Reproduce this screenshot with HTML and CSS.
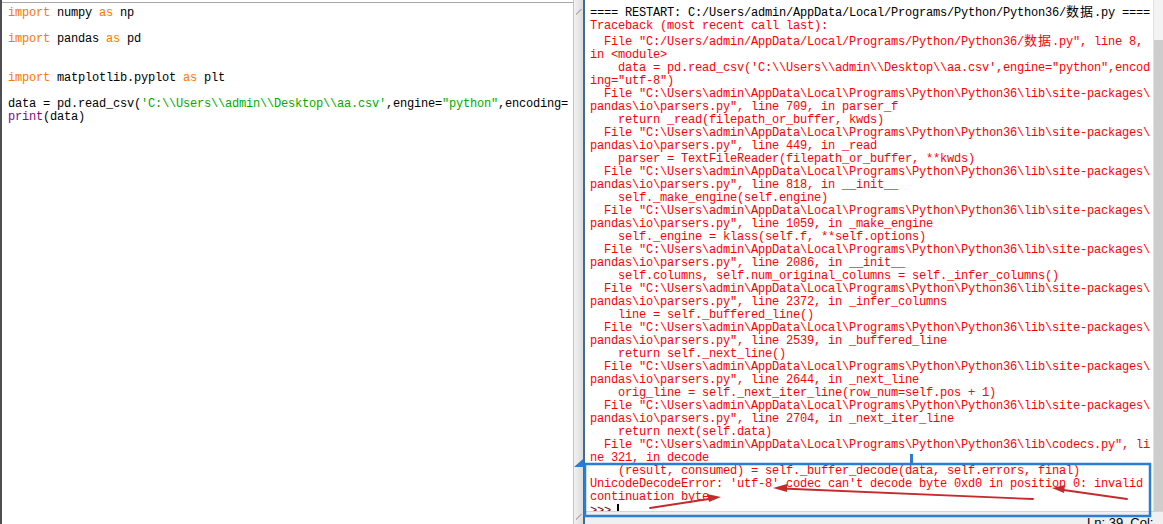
FILE: index.html
```html
<!DOCTYPE html>
<html lang="en">
<head>
  <meta charset="UTF-8">
  <title>IDLE - 数据.py</title>
  <link rel="stylesheet" href="styles.css">
</head>
<body>
  <div class="screen">
    <div class="edge"></div>

    <div class="editor">
<pre class="code"><span class="kw">import</span> numpy <span class="kw">as</span> np

<span class="kw">import</span> pandas <span class="kw">as</span> pd


<span class="kw">import</span> matplotlib.pyplot <span class="kw">as</span> plt

data = pd.read_csv(<span class="str">'C:\\Users\\admin\\Desktop\\aa.csv'</span>,engine=<span class="str">"python"</span>,encoding=<span class="str">"utf-8"</span>)
<span class="bi">print</span>(data)</pre>
    </div>
    <div class="lscroll"><span class="grip"></span><span class="grip bottom"></span></div>
    <div class="divider"></div>

    <div class="shell">
      <div class="shell-body">
<pre class="out"><span class="prompt">&gt;&gt;&gt; </span>
<span class="plain">==== RESTART: C:/Users/admin/AppData/Local/Programs/Python/Python36/<span class="cjk">数据</span>.py ====</span>
<span class="err">Traceback (most recent call last):
  File "C:/Users/admin/AppData/Local/Programs/Python/Python36/<span class="cjk">数据</span>.py", line 8,
in &lt;module&gt;
    data = pd.read_csv('C:\\Users\\admin\\Desktop\\aa.csv',engine="python",encod
ing="utf-8")
  File "C:\Users\admin\AppData\Local\Programs\Python\Python36\lib\site-packages\
pandas\io\parsers.py", line 709, in parser_f
    return _read(filepath_or_buffer, kwds)
  File "C:\Users\admin\AppData\Local\Programs\Python\Python36\lib\site-packages\
pandas\io\parsers.py", line 449, in _read
    parser = TextFileReader(filepath_or_buffer, **kwds)
  File "C:\Users\admin\AppData\Local\Programs\Python\Python36\lib\site-packages\
pandas\io\parsers.py", line 818, in __init__
    self._make_engine(self.engine)
  File "C:\Users\admin\AppData\Local\Programs\Python\Python36\lib\site-packages\
pandas\io\parsers.py", line 1059, in _make_engine
    self._engine = klass(self.f, **self.options)
  File "C:\Users\admin\AppData\Local\Programs\Python\Python36\lib\site-packages\
pandas\io\parsers.py", line 2086, in __init__
    self.columns, self.num_original_columns = self._infer_columns()
  File "C:\Users\admin\AppData\Local\Programs\Python\Python36\lib\site-packages\
pandas\io\parsers.py", line 2372, in _infer_columns
    line = self._buffered_line()
  File "C:\Users\admin\AppData\Local\Programs\Python\Python36\lib\site-packages\
pandas\io\parsers.py", line 2539, in _buffered_line
    return self._next_line()
  File "C:\Users\admin\AppData\Local\Programs\Python\Python36\lib\site-packages\
pandas\io\parsers.py", line 2644, in _next_line
    orig_line = self._next_iter_line(row_num=self.pos + 1)
  File "C:\Users\admin\AppData\Local\Programs\Python\Python36\lib\site-packages\
pandas\io\parsers.py", line 2704, in _next_iter_line
    return next(self.data)
  File "C:\Users\admin\AppData\Local\Programs\Python\Python36\lib\codecs.py", li
ne 321, in decode
    (result, consumed) = self._buffer_decode(data, self.errors, final)
UnicodeDecodeError: 'utf-8' codec can't decode byte 0xd0 in position 0: invalid
continuation byte</span>
<span class="prompt">&gt;&gt;&gt; </span><span class="caret"></span></pre>
        <div class="rscroll"><div class="thumb"></div></div>
      </div>
      <div class="status">Ln: 39&nbsp;&nbsp;Col: 4</div>
    </div>

    <svg class="marks" width="1163" height="524" viewBox="0 0 1163 524">
      <rect x="585" y="464" width="565" height="52" fill="none" stroke="#2a7dd4" stroke-width="2.5"/>
      <polygon points="574,467 583,459 584,467" fill="#2a7dd4"/>
      <rect x="910" y="454" width="3" height="9" fill="#2a7dd4"/>
      <g fill="#c42a2e" stroke="#c42a2e" stroke-linecap="round">
        <line x1="650" y1="508" x2="712" y2="498.5" stroke-width="1.8"/>
        <polygon points="721,497 707,494 709,502" stroke="none"/>
        <line x1="1033" y1="499" x2="782" y2="488.5" stroke-width="1.8"/>
        <polygon points="773,488 787,484 787,492" stroke="none"/>
        <line x1="1127" y1="499" x2="1060" y2="489.5" stroke-width="1.8"/>
        <polygon points="1052,488 1065,485 1064,493" stroke="none"/>
      </g>
    </svg>
  </div>
</body>
</html>
```

FILE: styles.css
```css
*{ margin: 0; padding: 0; box-sizing: border-box; }
html, body{
  width: 1163px;
  height: 524px;
  overflow: hidden;
  background: #fff;
}
.screen{
  position: relative;
  display: flex;
  width: 1163px;
  height: 524px;
  font-family: "Liberation Mono", "Noto Sans CJK SC", monospace;
  font-size: 12px;
  letter-spacing: -0.2px;
  line-height: 13px;
}
pre{
  font: inherit;
  white-space: pre;
}
.edge{
  width: 2px;
  background: #4d4f52;
}

/* editor window */
.editor{
  width: 571px;
  margin-top: 2px;
  border-top: 1px solid #a7a7a7;
  padding: 4px 0 0 6px;
  overflow: hidden;
  color: #000;
}
.code{
  width: 560px;
  overflow: hidden;
}
.kw{ color: #ff7700; }
.str{ color: #00aa00; }
.bi{ color: #900090; }
.lscroll{
  position: relative;
  width: 10px;
  border-left: 1px solid #c4c4c4;
  background: linear-gradient(to right, #f2f2f2, #dcdcdc);
}
.grip{
  position: absolute;
  top: 9px; left: 2px;
  width: 6px; height: 6px;
  background: linear-gradient(135deg, transparent 40%, #b5b5b5 40%, #b5b5b5 55%, transparent 55%);
}
.grip.bottom{ top: auto; bottom: 4px; }
.divider{
  width: 2px;
  background: #3f6b97;
}

/* shell window */
.shell{
  flex: 1;
  display: flex;
  flex-direction: column;
  min-width: 0;
}
.shell-body{
  flex: 1;
  display: flex;
  min-height: 0;
}
.out{
  flex: 1;
  overflow: hidden;
  margin-top: -9px;
  padding-left: 5px;
  color: #ff0000;
}
.plain{ color: #000; }
.prompt{ color: #770000; }
.cjk{
  font-family: "Noto Sans CJK SC", sans-serif;
  font-size: 13px;
  letter-spacing: 1px;
}
.caret{
  display: inline-block;
  width: 2px;
  height: 12px;
  margin-left: -1px;
  vertical-align: -2px;
  background: #000;
}
.rscroll{
  width: 10px;
  margin-left: 3px;
  border-left: 1px solid #e2e2e2;
  background: #f3f3f3;
  padding-top: 40px;
}
.thumb{
  height: 100%;
  background: #cdcdcd;
}
.status{
  height: 13px;
  border-top: 1px solid #d4d4d4;
  background: #f0f0f0;
  padding: 3px 0 0 502px;
  font-family: "Liberation Sans", Arial, sans-serif;
  font-size: 13px;
  letter-spacing: 0;
  line-height: 16px;
  color: #000;
  overflow: hidden;
}

/* annotations drawn over the screenshot */
.marks{
  position: absolute;
  top: 0; left: 0;
  pointer-events: none;
}
```
